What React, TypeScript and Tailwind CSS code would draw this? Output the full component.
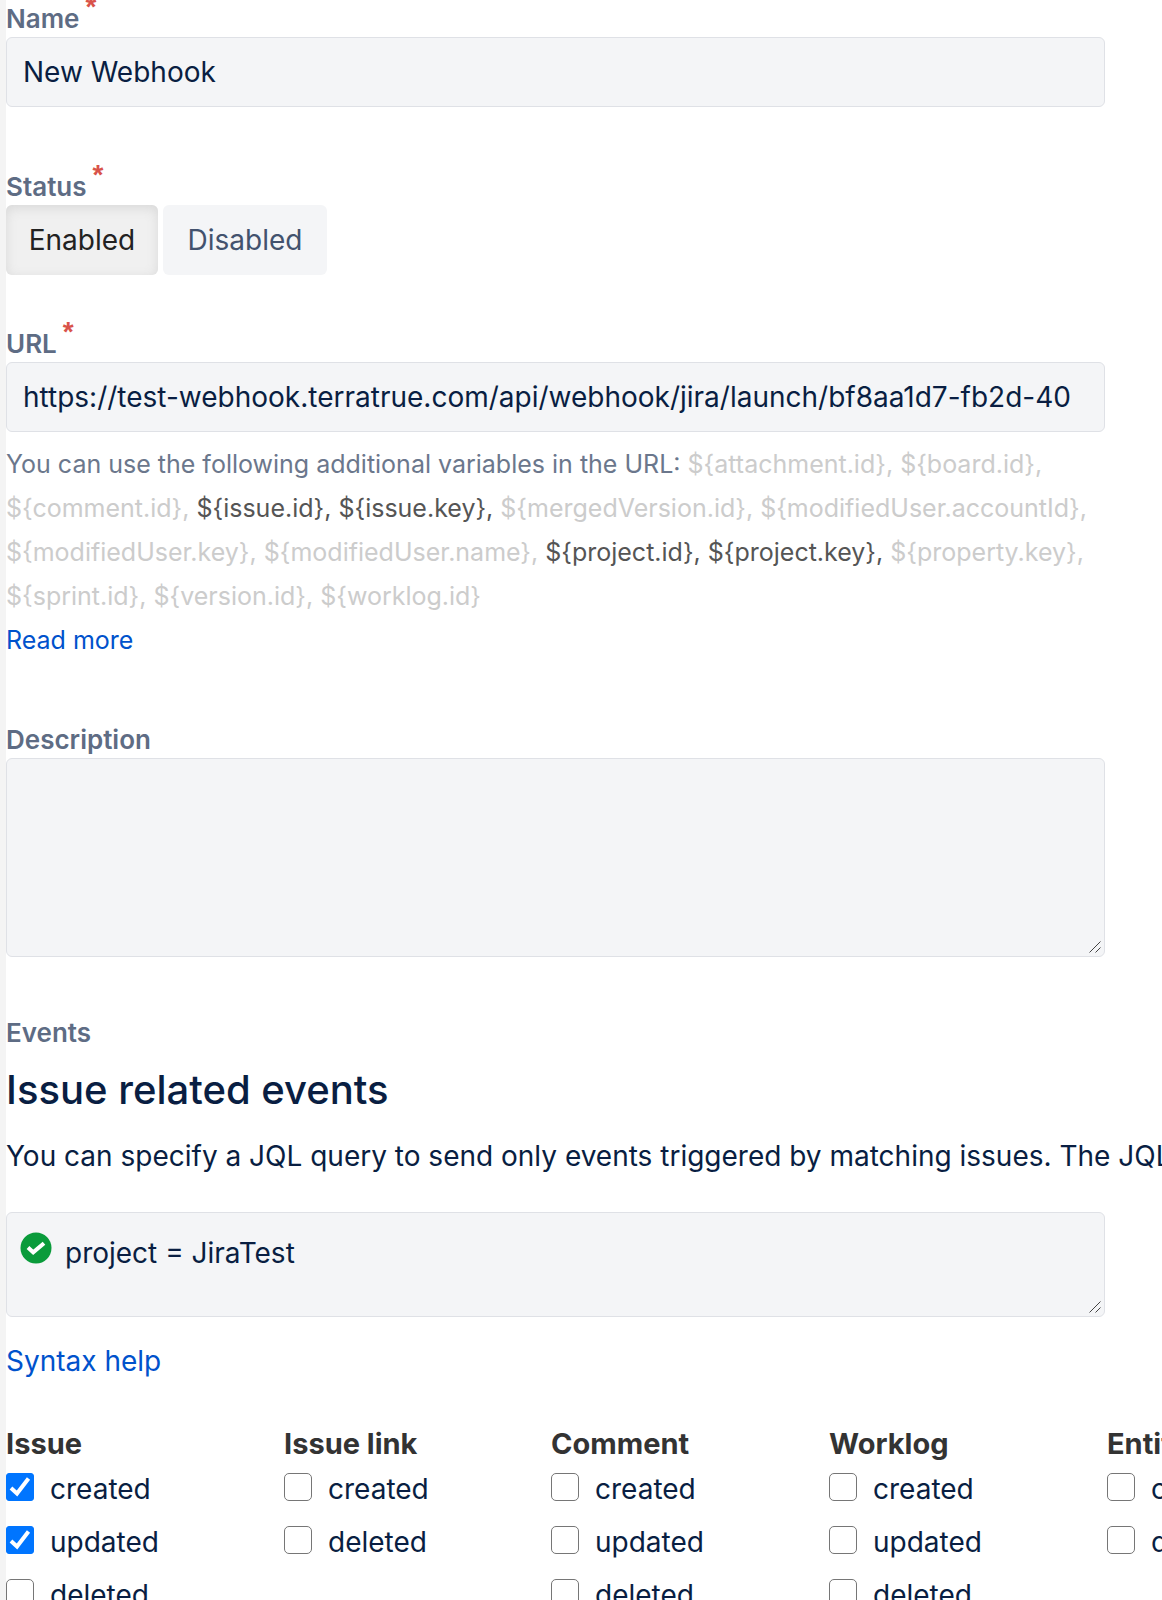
import { useState, type ReactNode } from "react";

const urlVariables = [
  { name: "attachment.id" },
  { name: "board.id" },
  { name: "comment.id" },
  { name: "issue.id", active: true },
  { name: "issue.key", active: true },
  { name: "mergedVersion.id" },
  { name: "modifiedUser.accountId" },
  { name: "modifiedUser.key" },
  { name: "modifiedUser.name" },
  { name: "project.id", active: true },
  { name: "project.key", active: true },
  { name: "property.key" },
  { name: "sprint.id" },
  { name: "version.id" },
  { name: "worklog.id" },
];

const eventGroups = [
  { title: "Issue", width: "w-[278px]", events: ["created", "updated", "deleted"], checked: ["created", "updated"] },
  { title: "Issue link", width: "w-[267px]", events: ["created", "deleted"], checked: [] },
  { title: "Comment", width: "w-[278px]", events: ["created", "updated", "deleted"], checked: [] },
  { title: "Worklog", width: "w-[278px]", events: ["created", "updated", "deleted"], checked: [] },
  { title: "Entity property", width: "w-[278px]", events: ["created or updated", "deleted"], checked: [] },
];

const labelClass = "block w-fit text-[26px] leading-[36px] font-semibold text-[#5e6c84]";
const fieldClass =
  "block w-full rounded-md border border-[#dfe1e6] bg-[#f4f5f7] px-4 text-[28px] text-[#091e42] outline-none [&::-webkit-resizer]:hidden";

const Required = () => (
  <span className="absolute -top-3 left-full ml-[6px] font-['Liberation_Sans'] text-[28px] font-bold text-[#d9534a]">*</span>
);

const Field = ({ id, label, required, children }: { id: string; label: string; required?: boolean; children: ReactNode }) => (
  <div>
    <label htmlFor={id} className={`${labelClass} relative`}>
      {label}
      {required && <Required />}
    </label>
    {children}
  </div>
);

const ValidIcon = () => (
  <svg viewBox="0 0 32 32" className="pointer-events-none absolute top-5 left-[14px] h-8 w-8" aria-hidden="true">
    <circle cx="16" cy="16" r="15.5" fill="#0a9b3b" />
    <path d="M8 15.5l5.2 4.8L24 11.2" fill="none" stroke="#fff" strokeWidth="4" />
  </svg>
);

const ResizeGrip = () => (
  <svg viewBox="0 0 12 12" className="pointer-events-none absolute right-1 bottom-1 h-3 w-3" aria-hidden="true">
    <path d="M0.5 11.5l11-11M6.5 11.5l5-5" stroke="#444" strokeWidth="1" />
  </svg>
);

const Checkbox = ({ label, checked }: { label: string; checked: boolean }) => (
  <label className="flex h-[53px] items-center gap-4 text-[28px]">
    <span className="relative mb-1 h-7 w-7 shrink-0">
      <input
        type="checkbox"
        defaultChecked={checked}
        className="peer block h-7 w-7 appearance-none rounded-[5px] border border-[#767676] bg-white checked:rounded-[3px] checked:border-[#0075ff] checked:bg-[#0075ff]"
      />
      <svg viewBox="0 0 28 28" className="pointer-events-none absolute inset-0 hidden h-7 w-7 peer-checked:block" aria-hidden="true">
        <path d="M5 15l6 5.5L22.5 5.5" fill="none" stroke="#fff" strokeWidth="4" />
      </svg>
    </span>
    {label}
  </label>
);

export default function App() {
  const [enabled, setEnabled] = useState(true);

  return (
    <main className="h-screen overflow-hidden border-l-[6px] border-[#f4f4f4] bg-white pt-px font-['Inter',sans-serif] text-[#091e42]">
      <form className="pr-[57px]">
        <Field id="name" label="Name" required>
          <input id="name" type="text" defaultValue="New Webhook" className={`${fieldClass} h-[70px]`} />
        </Field>

        <div className="mt-[62px]" role="group" aria-labelledby="status">
          <span id="status" className={`${labelClass} relative`}>
            Status
            <Required />
          </span>
          <div className="flex gap-[5px]">
            <button
              type="button"
              aria-pressed={enabled}
              onClick={() => setEnabled(true)}
              className="h-[70px] w-[152px] rounded-md bg-[#f0f0f0] text-[28px] text-[#222] shadow-[inset_0_3px_12px_#d8d8d8]"
            >
              Enabled
            </button>
            <button
              type="button"
              aria-pressed={!enabled}
              onClick={() => setEnabled(false)}
              className="h-[70px] w-[164px] rounded-md bg-[#f4f5f7] text-[28px] text-[#42526e]"
            >
              Disabled
            </button>
          </div>
        </div>

        <div className="mt-[51px]">
          <Field id="url" label="URL" required>
            <input
              id="url"
              type="text"
              defaultValue="https://test-webhook.terratrue.com/api/webhook/jira/launch/bf8aa1d7-fb2d-40"
              className={`${fieldClass} h-[70px]`}
            />
          </Field>
          <p className="mt-[10px] text-[25px] leading-[44px] text-[#6b778c]">
            You can use the following additional variables in the URL:{" "}
            {urlVariables.map((item, i) => (
              <span key={item.name} className={item.active ? "text-[#555]" : "text-[#ccc]"}>
                {`\${${item.name}}`}
                {i < urlVariables.length - 1 && ", "}
              </span>
            ))}
          </p>
          <a href="#read-more" className="block w-fit text-[25px] leading-[44px] text-[#0052cc]">
            Read more
          </a>
        </div>

        <div className="mt-[60px]">
          <Field id="description" label="Description">
            <div className="relative">
              <textarea id="description" className={`${fieldClass} h-[199px] resize-y`} />
              <ResizeGrip />
            </div>
          </Field>
        </div>

        <section className="mt-[58px]">
          <span className={labelClass}>Events</span>
          <h2 className="mt-[15px] text-[40px] leading-[48px] font-medium">Issue related events</h2>
          <p className="mt-5 text-[28px] leading-[44px] whitespace-nowrap">
            You can specify a JQL query to send only events triggered by matching issues. The JQL
          </p>
          <div className="relative mt-[34px]">
            <ValidIcon />
            <textarea
              aria-label="JQL query"
              defaultValue="project = JiraTest"
              className={`${fieldClass} h-[105px] resize-y pt-[18px] pl-[58px] leading-[44px]`}
            />
            <ResizeGrip />
          </div>
          <a href="#syntax-help" className="mt-[22px] block w-fit text-[28px] leading-[44px] text-[#0052cc]">
            Syntax help
          </a>
        </section>

        <div className="mt-[43px] flex">
          {eventGroups.map((group) => (
            <fieldset key={group.title} className={`${group.width} shrink-0 whitespace-nowrap`}>
              <legend className="text-[29px] leading-[36px] font-bold text-[#333]">{group.title}</legend>
              {group.events.map((event) => (
                <Checkbox key={event} label={event} checked={group.checked.includes(event)} />
              ))}
            </fieldset>
          ))}
        </div>
      </form>
    </main>
  );
}
